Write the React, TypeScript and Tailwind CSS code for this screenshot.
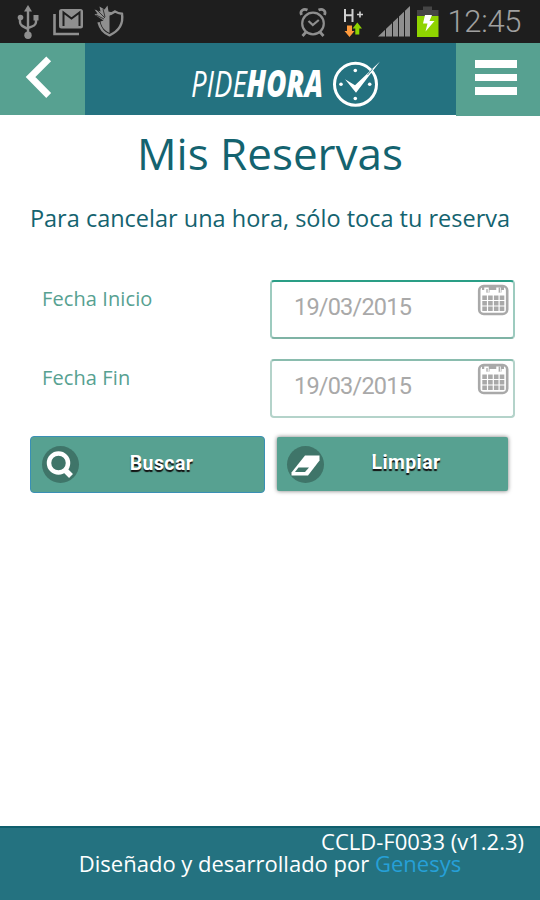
import { ReactNode } from "react";

function StatusBar() {
  return (
    <div className="h-[43px] w-full bg-[#1e1e1e] flex items-center justify-between">
      <svg width="130" height="43" viewBox="0 0 130 43" fill="none">
        {/* usb */}
        <g stroke="#8f8f8f" strokeWidth="2.4">
          <path d="M28 8v28M20 18v4c0 3 2 4 8 7M36 18v4c0 3-2 4-8 6" />
        </g>
        <path d="M28 5l4 6.500h-8z" fill="#8f8f8f" />
        <circle cx="20.5" cy="17.500" r="2.800" fill="#8f8f8f" />
        <rect x="33.500" y="15" width="5" height="5.500" fill="#8f8f8f" />
        <circle cx="28" cy="35.200" r="3.700" fill="#8f8f8f" />
        {/* mail */}
        <path d="M54.500 14v20H79" stroke="#8f8f8f" strokeWidth="2.600" />
        <rect x="59" y="9" width="24" height="19.500" rx="2.500" fill="#8f8f8f" />
        <path
          d="M63.500 26V12.500l8 6 8-6V26"
          stroke="#1e1e1e"
          strokeWidth="2"
        />
        {/* shield */}
        <path
          d="M108 14.500c3-.5 5-1.500 7-3 2.500 1.500 4.500 2 7 2.300 1.500 10-3.500 17.500-12.500 21.500-6-2-9.500-7-11-13"
          stroke="#8f8f8f"
          strokeWidth="2.400"
        />
        <path
          d="M109.500 33c-5-2.500-8-6-9-11.500l3-1-9-6 3-1-3-4 6 2-1-5 5 3 3-4 1 6 4 1-3 3z"
          fill="#8f8f8f"
        />
        <path d="M97 10l8 8M103 9l2 8M96 15l8 4" stroke="#1e1e1e" strokeWidth=".8" />
      </svg>
      <svg width="250" height="43" viewBox="290 0 250 43" fill="none">
        {/* alarm */}
        <circle cx="313" cy="23.500" r="10.800" stroke="#8f8f8f" strokeWidth="2.200" />
        <path d="M308.500 21l4.300 4 6-5" stroke="#8f8f8f" strokeWidth="2.200" />
        <path
          d="M301.500 15c-2-4 2-7 6-5M324.500 15c2-4-2-7-6-5M306 32l-3.500 4M320 32l3.500 4"
          stroke="#8f8f8f"
          strokeWidth="2.700"
        />
        {/* data */}
        <path d="M345 9v13M352.500 9v13M345 15.300h7.500" stroke="#d0d0d0" strokeWidth="2" />
        <path d="M360 11.500v6M357 14.500h6" stroke="#d0d0d0" strokeWidth="1.600" />
        <path d="M347 25.500h5v5.500h2.500l-5 6-5-6h2.500z" fill="#ff9a3c" />
        <path d="M355.300 34.500h4v-6h2.700l-4.700-6-4.700 6h2.700z" fill="#8fd400" />
        {/* signal */}
        <path d="M378 36.500L410 6v30.500z" fill="#8f8f8f" />
        <path
          d="M385.500 8v30M392.500 8v30M398.500 8v30M404.500 5v32"
          stroke="#1e1e1e"
          strokeWidth="1"
        />
        {/* battery */}
        <path d="M417 16v-6h6V6.500h9V10h6.500v6z" fill="#454545" />
        <rect x="417" y="16" width="21.500" height="21" fill="#8fd400" />
        <path d="M425 15h7l-2.500 6h5L425.500 31.500l2-8H423z" fill="#fff" />
        <text
          x="447.500"
          y="32"
          textLength="74"
          fontSize="31"
          fontWeight="300"
          fill="#a0a0a0"
          className="font-['Roboto',sans-serif]"
        >
          12:45
        </text>
      </svg>
    </div>
  );
}

function Logo() {
  return (
    <svg
      width="200"
      height="60"
      viewBox="185 50 200 60"
      fill="none"
      className="font-['Open_Sans',sans-serif] italic"
    >
      <text
        x="191"
        y="96.500"
        textLength="132"
        lengthAdjust="spacingAndGlyphs"
        fontSize="37"
        fill="#fff"
      >
        PIDE<tspan fontWeight="800">HORA</tspan>
      </text>
      <circle cx="355.500" cy="84.300" r="21" stroke="#fff" strokeWidth="3" />
      <path d="M380 61.500L356 92.800l-11-13.500 10 6z" fill="#fff" />
      <path d="M367.500 75L372.500 69" stroke="#247280" strokeWidth=".8" />
      <circle cx="355.300" cy="70.500" r="1.800" fill="#fff" />
      <circle cx="355.300" cy="98.500" r="1.800" fill="#fff" />
      <circle cx="341" cy="84.300" r="1.800" fill="#fff" />
      <circle cx="369.700" cy="84.300" r="1.800" fill="#fff" />
    </svg>
  );
}

function Header() {
  return (
    <div className="flex h-[72px] bg-[#247280]">
      <button className="w-[85px] h-[72px] bg-[#57a191]">
        <svg width="85" height="72" viewBox="0 43 85 72" fill="none">
          <path d="M48.700 58.800L30.500 77l18.200 18.500" stroke="#fff" strokeWidth="6.800" />
        </svg>
      </button>
      <div className="flex-1 pt-[7px] pl-[100px]">
        <Logo />
      </div>
      <button className="w-[84px] h-[73px] bg-[#57a191] flex flex-col items-center gap-[6px] pt-[17px] pr-1">
        <span className="w-[42px] h-[7.500px] bg-white" />
        <span className="w-[42px] h-[7.500px] bg-white" />
        <span className="w-[42px] h-[7.500px] bg-white" />
      </button>
    </div>
  );
}

function CalendarIcon() {
  const cols = [483.5, 489.3, 495.1, 500.9];
  const rows = [297.5, 303, 308.5];
  return (
    <svg width="32" height="32" viewBox="476 284 32 32" fill="none">
      <rect x="478.200" y="286" width="28" height="28" rx="4.500" fill="#fff" stroke="#a9a9a9" strokeWidth="2.600" />
      <path d="M481 286h22v4h-2.500v2.500h-3V290h-9v2.500h-3V290H481z" fill="#a9a9a9" />
      <path d="M485.500 287.500v5M497.500 287.500v5" stroke="#fff" strokeWidth="4.500" />
      <path d="M486 289v3.500M498.300 287.500v5" stroke="#a9a9a9" strokeWidth="1.300" />
      {rows.map((y) =>
        cols.map((x) => (
          <rect key={`${x}-${y}`} x={x - 2.2} y={y - 2} width="4.600" height="4.500" fill="#a9a9a9" />
        ))
      )}
    </svg>
  );
}

function DateRow({
  label,
  value,
  active,
}: {
  label: string;
  value: string;
  active?: boolean;
}) {
  return (
    <div className="flex justify-between h-[59px] pl-[42px] pr-[25px]">
      <label className="text-[20px] leading-[27px] pt-[5px] tracking-[0.1px] text-[#57a191]">
        {label}
      </label>
      <div
        className={`w-[245px] h-[59px] rounded-[4px] border-2 flex justify-between pl-[22px] pr-[4px] ${
          active
            ? "border-[#9dcbbf] border-t-[#2a9e86] border-b-[#7fb3a5]"
            : "border-[#b4d3ca] border-t-[#8abcae]"
        }`}
      >
        <span className="font-['Roboto',sans-serif] text-[23.5px] leading-[28px] pt-[11px] tracking-[-0.8px] text-[#a9a9a9]">
          {value}
        </span>
        <span className="pt-[2px]">
          <CalendarIcon />
        </span>
      </div>
    </div>
  );
}

function ActionButton({
  label,
  icon,
  className,
}: {
  label: string;
  icon: ReactNode;
  className: string;
}) {
  return (
    <button className={`bg-[#57a191] flex items-center ${className}`}>
      <span className="size-[37px] rounded-full bg-[#3f7569] shrink-0">{icon}</span>
      <span className="flex-1 text-center font-['Roboto',sans-serif] font-bold text-[19.5px] leading-[24px] pb-[2px] tracking-[0.4px] text-white [text-shadow:0_2px_1px_#111]">
        {label}
      </span>
    </button>
  );
}

export default function App() {
  return (
    <div className="w-[540px] h-[900px] flex flex-col bg-white overflow-hidden font-['Open_Sans',sans-serif]">
      <StatusBar />
      <Header />
      <main className="flex-1">
        <h1 className="text-center text-[44px] leading-[60px] mt-[8px] text-[#14636f]">
          Mis Reservas
        </h1>
        <p className="text-center text-[23.5px] leading-[32px] mt-[19px] whitespace-nowrap text-[#14636f]">
          Para cancelar una hora, sólo toca tu reserva
        </p>
        <div className="flex flex-col gap-[20px] mt-[46px]">
          <DateRow label="Fecha Inicio" value="19/03/2015" active />
          <DateRow label="Fecha Fin" value="19/03/2015" />
        </div>
        <div className="flex mt-[18px] pl-[30px] gap-[12px]">
          <ActionButton
            label="Buscar"
            className="w-[235px] h-[57px] rounded-[4px] border border-[#3a8fb5] pl-[11px] pr-[20px]"
            icon={
              <svg width="37" height="37" viewBox="0 0 37 37" fill="none">
                <circle cx="16.500" cy="17" r="9.500" stroke="#fff" strokeWidth="4.500" />
                <path d="M23 24l6 6" stroke="#fff" strokeWidth="5.500" />
              </svg>
            }
          />
          <ActionButton
            label="Limpiar"
            className="w-[231px] h-[54px] mt-[1px] rounded-[2px] shadow-[0_0_4px_#777] pl-[10px] pr-[20px]"
            icon={
              <svg width="37" height="37" viewBox="0 0 37 37" fill="none">
                <path d="M18 9.500h14.500v5L21 29.500H4.500v-3z" fill="#fff" />
                <path d="M11.500 21.500H22l-4 4.500H8z" fill="#3f7569" />
              </svg>
            }
          />
        </div>
      </main>
      <footer className="h-[74px] bg-[#247280] border-t-2 border-[#0f5f6d] text-[22px] leading-[22px] text-white whitespace-nowrap">
        <p className="text-right pr-[16px] pt-[2px]">CCLD-F0033 (v1.2.3)</p>
        <p className="text-center">
          Diseñado y desarrollado por <span className="text-[#26a0d8]">Genesys</span>
        </p>
      </footer>
    </div>
  );
}
